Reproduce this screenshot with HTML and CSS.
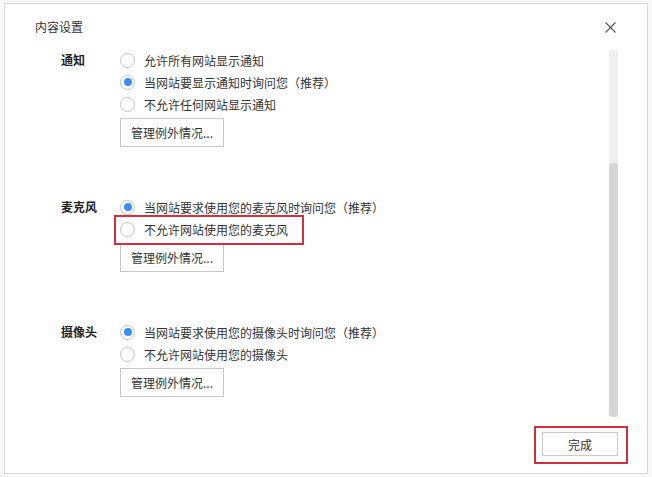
FILE: index.html
```html
<!DOCTYPE html>
<html lang="zh-CN">
<head>
<meta charset="utf-8">
<title>内容设置</title>
<link rel="stylesheet" href="styles.css">
</head>
<body>
<div class="dialog">
  <div class="header">
    <span class="title">内容设置</span>
    <svg class="close" width="11" height="11" viewBox="0 0 11 11"><path d="M0.5 0.5L10.5 10.5M10.5 0.5L0.5 10.5" stroke="#555" stroke-width="1.1" fill="none"/></svg>
  </div>
  <div class="body">
    <div class="content">
      <div class="section">
        <div class="label">通知</div>
        <div class="options">
          <div class="row"><span class="radio"></span><span>允许所有网站显示通知</span></div>
          <div class="row"><span class="radio checked"></span><span>当网站要显示通知时询问您（推荐）</span></div>
          <div class="row"><span class="radio"></span><span>不允许任何网站显示通知</span></div>
          <button class="btn">管理例外情况...</button>
        </div>
      </div>
      <div class="section">
        <div class="label">麦克风</div>
        <div class="options">
          <div class="row"><span class="radio checked"></span><span>当网站要求使用您的麦克风时询问您（推荐）</span></div>
          <div class="row highlight"><span class="radio"></span><span>不允许网站使用您的麦克风</span></div>
          <button class="btn">管理例外情况...</button>
        </div>
      </div>
      <div class="section">
        <div class="label">摄像头</div>
        <div class="options">
          <div class="row"><span class="radio checked"></span><span>当网站要求使用您的摄像头时询问您（推荐）</span></div>
          <div class="row"><span class="radio"></span><span>不允许网站使用您的摄像头</span></div>
          <button class="btn">管理例外情况...</button>
        </div>
      </div>
    </div>
    <div class="track"><div class="thumb"></div></div>
  </div>
  <div class="footer">
    <div class="done-wrap"><button class="btn done">完成</button></div>
  </div>
</div>
</body>
</html>
```

FILE: styles.css
```css
* { box-sizing: border-box; }
html, body { margin: 0; padding: 0; }
body {
  background: #f7f7f7;
  font-family: "Noto Sans CJK SC", "Microsoft YaHei", sans-serif;
  font-size: 12px;
  color: #333;
  width: 652px;
  height: 477px;
  padding: 3px 0 0 4px;
}
.dialog {
  width: 644px;
  height: 471px;
  background: #fff;
  border: 1px solid #d9d9d9;
  display: flex;
  flex-direction: column;
}
.header {
  height: 45px;
  flex: none;
  display: flex;
  align-items: center;
  justify-content: space-between;
  padding: 1px 31px 0 30px;
}
.title { line-height: 16px; color: #333; }
.close { display: block; }
.body {
  flex: none;
  height: 368px;
  display: flex;
  overflow: hidden;
}
.content {
  flex: 1;
  padding-left: 56px;
}
.section {
  display: flex;
  margin-bottom: 49px;
}
.label {
  width: 59px;
  height: 22px;
  line-height: 22px;
  font-weight: bold;
  color: #222;
}
.options {
  display: flex;
  flex-direction: column;
  align-items: flex-start;
}
.row {
  height: 22px;
  display: flex;
  align-items: center;
  white-space: nowrap;
  position: relative;
}
.radio {
  width: 15px;
  height: 15px;
  border: 1px solid #c4c4c4;
  border-radius: 50%;
  margin-right: 9px;
  display: flex;
  align-items: center;
  justify-content: center;
  background: #fff;
}
.radio.checked::before {
  content: "";
  width: 8px;
  height: 8px;
  border-radius: 50%;
  background: #3a8ef6;
}
.highlight::after {
  content: "";
  position: absolute;
  left: -6px;
  top: -3px;
  width: 186px;
  height: 26px;
  border: 2px solid #d3303d;
}
.btn {
  font-family: inherit;
  font-size: 12px;
  color: #333;
  background: #fff;
  border: 1px solid #c8c8c8;
  border-radius: 0;
  width: 104px;
  height: 29px;
  margin-top: 3px;
  padding: 0;
  cursor: pointer;
}
.track {
  flex: none;
  width: 9px;
  margin: 1px 29px 0 0;
  background: #efefef;
  padding-top: 113px;
}
.thumb {
  height: 254px;
  background: #d6d6d6;
  border-radius: 4px;
}
.footer {
  flex: 1;
  display: flex;
  justify-content: flex-end;
  align-items: flex-start;
  padding: 9px 19px 0 0;
}
.done-wrap {
  border: 2px solid #d3303d;
  padding: 4px 8px 6px 6px;
}
.done {
  width: 76px;
  height: 24px;
  margin: 0;
  display: block;
}
```
